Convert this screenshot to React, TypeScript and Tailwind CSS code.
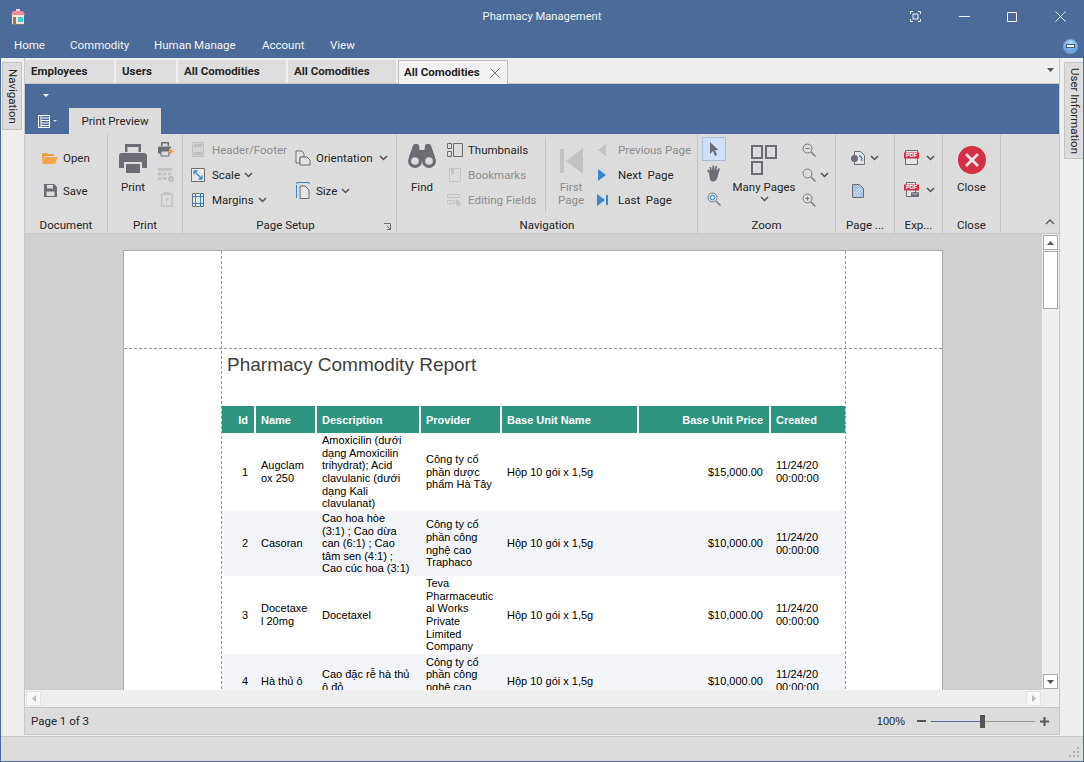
import React from "react";

const UI = "font-['Roboto',sans-serif]";

const Chev = ({ c = "#555" }: { c?: string }) => (
  <svg width="9" height="6" viewBox="0 0 9 6" className="shrink-0"><path d="M1 1l3.5 3.5L8 1" fill="none" stroke={c} strokeWidth="1.5" /></svg>
);

const PdfLabel = () => (
  <text x="7.5" y="7.2" textAnchor="middle" fontSize="5.5" fontWeight="700" fontFamily="Liberation Sans, sans-serif" fill="#fff">PDF</text>
);

const Ic = {
  Open: () => (
    <svg width="16" height="14" viewBox="0 0 16 14"><path d="M0 2h5l1 1h6v2H3L0 11z" fill="#f0a040" /><path d="M3 6h13l-3 7H0z" fill="#f4a54a" /></svg>
  ),
  Save: () => (
    <svg width="13" height="13" viewBox="0 0 13 13"><path d="M0 0h10l3 3v10H0z" fill="#6d6e75" /><path d="M3 1h6v3.500H3z" fill="#ddd" /><path d="M2.500 7.500h8V12h-8z" fill="#ddd" /></svg>
  ),
  Printer: () => (
    <svg width="28" height="29" viewBox="0 0 28 29"><path d="M6 0h16v8H19.500V3h-11v5H6z" fill="#6d6e75" /><path d="M3 9h22a3 3 0 013 3v12h-5v-6H5v6H0V12a3 3 0 013-3z" fill="#6d6e75" /><path d="M7 20h14v9H7z" fill="#6d6e75" /></svg>
  ),
  PrintQuick: () => (
    <svg width="17" height="16" viewBox="0 0 17 16"><path d="M3 0h8v4H9.500V1.500h-5V4H3z" fill="#6d6e75" /><path d="M1 4.500h12v1l-2 2 1 1v3H0v-6z" fill="#6d6e75" /><path d="M3 9h8v5H3z" fill="#ddd" stroke="#6d6e75" /><path d="M13 6l1 2.500 2.500 1-2.500 1-1 2.500-1-2.500-2.500-1 2.500-1z" fill="#f4a040" /></svg>
  ),
  PageSetupGrid: () => (
    <svg width="17" height="16" viewBox="0 0 17 16"><path d="M0 1h14v3H0zM0 5.500h3.500v3H0zM5 5.500h3.500v3H5zM10 5.500h3.500v3H10zM0 10h3.500v3H0zM5 10h3.500v3H5z" fill="#c2c2c2" /><circle cx="13" cy="12" r="3" fill="#bdbdbd" /><circle cx="13" cy="12" r="1" fill="#ddd" /></svg>
  ),
  Clip: () => (
    <svg width="12" height="15" viewBox="0 0 12 15"><path d="M.75 2h10.500v12.250H.75z" fill="none" stroke="#c2c2c2" strokeWidth="1.500" /><path d="M3 0h6v3H3z" fill="#c2c2c2" /><path d="M5 6h2.500v2.500H6v1H5M5 11h1.200v1.200H5z" fill="#c2c2c2" /></svg>
  ),
  Header: () => (
    <svg width="12" height="15" viewBox="0 0 12 15"><path d="M.5.500h11v14H.5z" fill="#d4d4d4" stroke="#bfbfbf" /><path d="M2 2h8v3H2zM2 10h8v3H2z" fill="#bfbfbf" /></svg>
  ),
  Scale: () => (
    <svg width="14" height="14" viewBox="0 0 14 14"><path d="M.5.500h13v13H.5z" fill="#e8e8e8" stroke="#6d6e75" /><path d="M3 3l8 8M3 3h3.500M3 3v3.500M11 11H7.500M11 11V7.500" fill="none" stroke="#3f86c8" strokeWidth="1.300" /></svg>
  ),
  Margins: () => (
    <svg width="12" height="14" viewBox="0 0 12 14"><path d="M.5.500h11v13H.5z" fill="#e4e9f0" stroke="#6d6e75" /><path d="M3.500 0v14M8.500 0v14M0 3.500h12M0 10.500h12" stroke="#3f7fc0" /></svg>
  ),
  Orientation: () => (
    <svg width="16" height="16" viewBox="0 0 16 16"><path d="M1 1h6l2 3v3H5v6H1z" fill="#e4e4e4" stroke="#6d6e75" /><path d="M5 7h7l3 3v5H5z" fill="#e4e4e4" stroke="#6d6e75" /></svg>
  ),
  Size: () => (
    <svg width="15" height="17" viewBox="0 0 15 17"><path d="M1 .500h12M1 0v2M13 0v2" stroke="#3f86c8" fill="none" /><path d="M.5 3v13" stroke="#3f86c8" /><path d="M4 4h5l4 4v8.500H4z" fill="#e4e4e4" stroke="#6d6e75" /></svg>
  ),
  Binoculars: () => (
    <svg width="28" height="24" viewBox="0 0 28 24">
      <path d="M5 1.500A2 2 0 017 0h2a2 2 0 012 1.500L11.500 6h5L17 1.500A2 2 0 0119 0h2a2 2 0 012 1.500L27 13v4H1v-4z" fill="#6d6e75" />
      <circle cx="7" cy="17" r="7" fill="#6d6e75" /><circle cx="21" cy="17" r="7" fill="#6d6e75" />
      <circle cx="7" cy="17" r="3.800" fill="#dcdcdc" /><circle cx="21" cy="17" r="3.800" fill="#dcdcdc" />
    </svg>
  ),
  Thumb: () => (
    <svg width="16" height="14" viewBox="0 0 16 14"><path d="M.5.500h4v5h-4zM.5 8.500h4v5h-4zM6.500.500h9v13h-9z" fill="none" stroke="#6d6e75" /></svg>
  ),
  Bookmark: () => (
    <svg width="12" height="14" viewBox="0 0 12 14"><path d="M.5.500h11v13H.5z" fill="none" stroke="#c4c4c4" /><path d="M2 0h3v7L3.500 5.500 2 7z" fill="#c4c4c4" /></svg>
  ),
  Editing: () => (
    <svg width="16" height="14" viewBox="0 0 16 14"><path d="M.5 1.500h12v3H.5zM.5 7.500h7v3h-7z" fill="none" stroke="#c4c4c4" /><path d="M9 6l6 5-3 .5 1 2.500h-2l-1-2.500L9 13z" fill="#c4c4c4" /></svg>
  ),
  First: () => (
    <svg width="23" height="28" viewBox="0 0 23 28"><path d="M0 2h4v24H0zM23 1v26L6 14z" fill="#c2c2c2" /></svg>
  ),
  Prev: () => <svg width="8" height="12" viewBox="0 0 8 12"><path d="M8 0v12L0 6z" fill="#c2c2c2" /></svg>,
  Next: () => <svg width="8" height="12" viewBox="0 0 8 12"><path d="M0 0v12l8-6z" fill="#3f86c8" /></svg>,
  Last: () => <svg width="11" height="12" viewBox="0 0 11 12"><path d="M0 0v12l8-6zM9 1h2v10H9z" fill="#3f86c8" /></svg>,
  Arrow: () => <svg width="10" height="14" viewBox="0 0 10 14"><path d="M1 0l8.500 8H6l2 5-2 1-2-5-3 3z" fill="#6d6e75" /></svg>,
  Hand: () => (
    <svg width="17" height="17" viewBox="0 0 17 17"><path d="M3 8L1 5.500 2.200 4.500 4 6 3.500 2h1.500l1 3.500L6.500.500h1.500L8.500 5l1-4h1.500l-.5 5 2-3 1.500.8L12 10c-.5 4-2 6.500-5 6.500S4 14 3 8z" fill="#6d6e75" /></svg>
  ),
  Glass: ({ plus, minus, blue }: { plus?: boolean; minus?: boolean; blue?: boolean }) => (
    <svg width="14" height="14" viewBox="0 0 14 14">
      <circle cx="5.500" cy="5.500" r="4.500" fill={blue ? "#cfe0f2" : "none"} stroke="#7a7b82" />
      {blue && <circle cx="5.500" cy="5.500" r="2.300" fill="none" stroke="#3f86c8" />}
      <path d="M9 9l4.500 4.500" stroke="#7a7b82" strokeWidth="1.500" />
      {(plus || minus) && <path d="M3.500 5.500h4" stroke="#7a7b82" />}
      {plus && <path d="M5.500 3.500v4" stroke="#7a7b82" />}
    </svg>
  ),
  Many: () => (
    <svg width="26" height="30" viewBox="0 0 26 30"><path d="M1 1h10v12H1zM15 1h10v12H15zM1 17h10v12H1z" fill="none" stroke="#6d6e75" strokeWidth="2" /></svg>
  ),
  PageColor: () => (
    <svg width="14" height="14" viewBox="0 0 14 14"><path d="M3.500.500h6l4 4v9h-10z" fill="#e4e4e4" stroke="#6d6e75" /><circle cx="3.500" cy="7.500" r="3.500" fill="#6d6e75" /><path d="M8 5c2 0 3 1.500 3 5" fill="none" stroke="#3f86c8" strokeWidth="1.500" /></svg>
  ),
  Watermark: () => (
    <svg width="12" height="14" viewBox="0 0 12 14"><path d="M.5.500h7l4 4v9H.5z" fill="#a9c4e2" stroke="#6d6e75" /><path d="M2 12l7-7M2 9l5-5M5 12l5-5" stroke="#dbe6f2" /></svg>
  ),
  Pdf: () => (
    <svg width="15" height="15" viewBox="0 0 15 15">
      <path d="M1.500.500h12v14h-12z" fill="#e4e4e4" stroke="#6d6e75" strokeWidth="1" />
      <path d="M0 2.500h15v6H0z" fill="#d42e44" />
      <PdfLabel />
    </svg>
  ),
  PdfMail: () => (
    <svg width="15" height="15" viewBox="0 0 15 15">
      <path d="M2.500.500h9v14h-9z" fill="#e4e4e4" stroke="#6d6e75" strokeWidth="1" />
      <path d="M0 2.500h15v6H0z" fill="#d42e44" />
      <PdfLabel />
      <path d="M7 10h8v5H7z" fill="#6d6e75" /><path d="M7.500 10.500l3.500 2 3.500-2" fill="none" stroke="#ddd" strokeWidth=".7" />
    </svg>
  ),
  Close: () => (
    <svg width="28" height="28" viewBox="0 0 28 28"><circle cx="14" cy="14" r="14" fill="#d32f45" /><path d="M8 8l12 12M20 8L8 20" stroke="#f1e4e6" strokeWidth="2.800" /></svg>
  ),
};

const Small = ({ icon, label, dim, w = 16, gap = 5, chev, chevGap = 4 }: any) => (
  <div className={`h-[25px] flex items-center ${dim ? "text-[#8e8e8e]" : "text-[#262626]"}`}>
    <div className="flex justify-center items-center shrink-0" style={{ width: w }}>{icon}</div>
    {label && <span className="whitespace-nowrap pt-[2px]" style={{ marginLeft: gap }}>{label}</span>}
    {chev && <span style={{ marginLeft: chevGap }}><Chev /></span>}
  </div>
);

const Group = ({ w, label, children, launcher }: any) => (
  <div className="relative h-full flex flex-col border-r border-[#c4c4c4] shrink-0" style={{ width: w }}>
    <div className="h-[83px] flex items-start">{children}</div>
    <div className={`flex-1 text-center text-[#262626] truncate leading-[16px] ${launcher ? "pr-[8px]" : ""}`}>{label}</div>
    {launcher && (
      <svg width="7" height="7" viewBox="0 0 7 7" className="absolute right-[5px] bottom-[3px]"><path d="M0 .500h6.500V7M3 3l3 3M3 6.500h3.500" fill="none" stroke="#6d6e75" /></svg>
    )}
  </div>
);

const Tab = ({ w, children }: any) => (
  <div className="h-[24px] flex items-center pl-[6px] pt-[1px] mr-[2px] bg-[#dddddd] font-bold text-[#262626] border-b border-[#c8c8c8]" style={{ width: w }}>{children}</div>
);

const SideTab = ({ h, label }: { h: number; label: string }) => (
  <div className="w-[20px] bg-[#dcdcdc] border border-[#c4c4c4] text-[#262626] flex justify-center items-center whitespace-nowrap [writing-mode:vertical-rl]" style={{ height: h }}>
    {label}
  </div>
);

const cols = [34, 61, 104, 81, 137, 132, 74];
const rows: { h: number; alt?: boolean; c: string[] }[] = [
  { h: 78, c: ["1", "Augclam\nox 250", "Amoxicilin (dưới\ndạng Amoxicilin\ntrihydrat); Acid\nclavulanic (dưới\ndạng Kali\nclavulanat)", "Công ty cổ\nphần dược\nphẩm Hà Tây", "Hộp 10 gói x 1,5g", "$15,000.00", "11/24/20\n00:00:00"] },
  { h: 65, alt: true, c: ["2", "Casoran", "Cao hoa hòe\n(3:1) ; Cao dừa\ncan (6:1) ; Cao\ntâm sen (4:1) ;\nCao cúc hoa (3:1)", "Công ty cổ\nphần công\nnghệ cao\nTraphaco", "Hộp 10 gói x 1,5g", "$10,000.00", "11/24/20\n00:00:00"] },
  { h: 78, c: ["3", "Docetaxe\nl 20mg", "Docetaxel", "Teva\nPharmaceutic\nal Works\nPrivate\nLimited\nCompany", "Hộp 10 gói x 1,5g", "$10,000.00", "11/24/20\n00:00:00"] },
  { h: 54, alt: true, c: ["4", "Hà thủ ô", "Cao đặc rễ hà thủ\nô đỏ", "Công ty cổ\nphần công\nnghệ cao\nTraphaco", "Hộp 10 gói x 1,5g", "$10,000.00", "11/24/20\n00:00:00"] },
];
const heads = ["Id", "Name", "Description", "Provider", "Base Unit Name", "Base Unit Price", "Created"];
const rightCol = (i: number) => i === 0 || i === 5;

export default function App() {
  return (
    <div className={`${UI} w-[1084px] h-[762px] overflow-hidden bg-[#efefef] text-[11.5px] flex flex-col border-x border-b border-[#4d6b9a]`}>
      {/* title bar */}
      <div className="h-[33px] shrink-0 bg-[#4d6b9a] grid grid-cols-[1fr_auto_1fr] items-center text-[#f2f2f2]">
        <svg width="16" height="16" viewBox="0 0 16 16" className="ml-[9px]">
          <path d="M3 2h10l2 4H1z" fill="#f08c9c" /><path d="M6 0h4v2H6z" fill="#f4d0d6" /><path d="M2 6h12v9H2z" fill="#f6e8d0" /><path d="M8 8h5v5H8z" fill="#45c8d8" /><path d="M3 8h3v7H3z" fill="#8a7a5a" /><path d="M1 15h14v1H1z" fill="#777" />
        </svg>
        <div className="text-center text-[11.2px] pt-[2px]">Pharmacy Management</div>
        <div className="flex items-center justify-end pr-[17px]">
          <svg width="11" height="11" viewBox="0 0 11 11" className="mr-[38px]"><path d="M.5 3V.500H3M8 .500h2.500V3M10.500 8v2.500H8M3 10.500H.5V8M3 3h5v5H3z" fill="none" stroke="#f2f2f2" /></svg>
          <svg width="11" height="11" viewBox="0 0 11 11" className="mr-[37px]"><path d="M0 5.500h11" stroke="#f2f2f2" /></svg>
          <svg width="10" height="10" viewBox="0 0 10 10" className="mr-[38px]"><path d="M.5.500h9v9h-9z" fill="none" stroke="#f2f2f2" /></svg>
          <svg width="11" height="11" viewBox="0 0 11 11"><path d="M.5.500l10 10M10.500.500l-10 10" stroke="#f2f2f2" /></svg>
        </div>
      </div>
      {/* menu */}
      <div className="h-[25px] shrink-0 bg-[#4d6b9a] flex items-center text-[#f2f2f2] pt-[1px]">
        <span className="ml-[13px] w-[56px]">Home</span>
        <span className="w-[84px]">Commodity</span>
        <span className="w-[108px]">Human Manage</span>
        <span className="w-[68px]">Account</span>
        <span>View</span>
        <div className="ml-auto mr-[5px] w-[15px] h-[15px] rounded-full bg-[radial-gradient(circle_at_50%_20%,#b0d4f2,#4d94d8)] flex items-center justify-center border border-[#7aa6d4]">
          <div className="w-[9px] h-[4px] bg-white border border-[#3a5a88]" />
        </div>
      </div>
      {/* body */}
      <div className="flex-1 flex min-h-0">
        <div className="w-[23px] shrink-0 pt-[4px] pl-[1px]"><SideTab h={68} label="Navigation" /></div>
        <div className="w-[1036px] shrink-0 flex flex-col border-x border-[#c8c8c8] mb-[1px] border-b">
          {/* tabs */}
          <div className="h-[25px] shrink-0 pt-[2px] flex bg-[#efefef] relative">
            <Tab w={89}>Employees</Tab>
            <Tab w={60}>Users</Tab>
            <Tab w={108}>All Comodities</Tab>
            <Tab w={108}>All Comodities</Tab>
            <div className="h-[24px] w-[110px] flex items-center justify-between pl-[5px] pr-[7px] bg-[#f2f2f2] border border-b-0 border-[#c0c0c0] font-bold text-[#262626] z-10">
              All Comodities
              <svg width="10" height="10" viewBox="0 0 10 10"><path d="M.5.500l9 9M9.500.500l-9 9" stroke="#777" /></svg>
            </div>
            <svg width="7" height="4" viewBox="0 0 7 4" className="absolute right-[5px] top-[10px]"><path d="M0 0h7L3.500 4z" fill="#555" /></svg>
          </div>
          {/* ribbon head */}
          <div className="h-[51px] shrink-0 bg-[#4d6b9a] flex flex-col border-t border-[#c8c8c8]">
            <div className="h-[24px] pl-[18px] pt-[10px]">
              <svg width="6" height="3" viewBox="0 0 6 3" className="block"><path d="M0 0h6L3 3z" fill="#fff" /></svg>
            </div>
            <div className="flex items-end flex-1 pl-[13px]">
              <div className="w-[32px] h-[26px] flex items-center gap-[3px]">
                <svg width="12" height="13" viewBox="0 0 12 13"><path d="M.5.500h11v12H.5z" fill="#4d6b9a" stroke="#fff" /><path d="M3 0v13M3 3h9M3 5.500h9M3 8h9M3 10.500h9" stroke="#fff" /></svg>
                <svg width="4" height="2" viewBox="0 0 4 2"><path d="M0 0h4L2 2z" fill="#ddd" /></svg>
              </div>
              <div className="ml-[-1px] w-[92px] h-[26px] pt-[2px] bg-[#dcdcdc] text-[#262626] flex items-center justify-center">Print Preview</div>
            </div>
          </div>
          {/* ribbon */}
          <div className="h-[100px] shrink-0 bg-[#dcdcdc] flex relative border-b border-[#c8c8c8]">
            <Group w={83} label="Document">
              <div className="flex flex-col pl-[17px] pt-[11px]">
                <div className="h-[33px]"><Small icon={<Ic.Open />} label="Open" /></div>
                <Small icon={<Ic.Save />} label="Save" />
              </div>
            </Group>
            <Group w={75} label="Print">
              <div className="flex w-full pt-[3px]">
                <div className="w-[50px] flex flex-col items-center pt-[7px]">
                  <Ic.Printer />
                  <span className="mt-[6px] text-[#262626]">Print</span>
                </div>
                <div className="flex flex-col">
                  <Small icon={<Ic.PrintQuick />} w={17} />
                  <Small icon={<Ic.PageSetupGrid />} w={17} />
                  <Small icon={<Ic.Clip />} w={17} />
                </div>
              </div>
            </Group>
            <Group w={214} label="Page Setup" launcher>
              <div className="flex pt-[3px] pl-[8px]">
                <div className="flex flex-col w-[104px]">
                  <Small icon={<Ic.Header />} label="Header/Footer" dim w={14} gap={7} />
                  <Small icon={<Ic.Scale />} label="Scale" w={14} gap={7} chev />
                  <Small icon={<Ic.Margins />} label="Margins" w={14} gap={7} chev />
                </div>
                <div className="flex flex-col pt-[8px]">
                  <div className="h-[33px]"><Small icon={<Ic.Orientation />} label="Orientation" chev chevGap={6} /></div>
                  <Small icon={<Ic.Size />} label="Size" chev />
                </div>
              </div>
            </Group>
            <Group w={301} label="Navigation">
              <div className="flex pt-[3px] h-full">
                <div className="w-[50px] flex flex-col items-center pt-[7px] text-[#262626]">
                  <Ic.Binoculars />
                  <span className="mt-[11px]">Find</span>
                </div>
                <div className="flex flex-col w-[99px] border-r border-[#c4c4c4] h-[75px]">
                  <Small icon={<Ic.Thumb />} label="Thumbnails" />
                  <Small icon={<Ic.Bookmark />} label="Bookmarks" dim />
                  <Small icon={<Ic.Editing />} label="Editing Fields" dim />
                </div>
                <div className="w-[50px] flex flex-col items-center pt-[10px] text-[#8e8e8e] leading-[13px]">
                  <Ic.First />
                  <span className="mt-[6px]">First</span>
                  <span>Page</span>
                </div>
                <div className="flex flex-col">
                  <Small icon={<Ic.Prev />} label="Previous Page" dim w={12} gap={10} />
                  <Small icon={<Ic.Next />} label={<span className="whitespace-pre">Next  Page</span>} w={12} gap={10} />
                  <Small icon={<Ic.Last />} label={<span className="whitespace-pre">Last  Page</span>} w={12} gap={10} />
                </div>
              </div>
            </Group>
            <Group w={138} label="Zoom">
              <div className="flex pt-[3px] pl-[4px]">
                <div className="flex flex-col items-center w-[24px]">
                  <div className="w-[24px] h-[24px] bg-[#cfdff7] border border-[#a8bcdc] flex items-center justify-center"><Ic.Arrow /></div>
                  <div className="h-[25px] flex items-center"><Ic.Hand /></div>
                  <div className="h-[25px] flex items-center"><Ic.Glass blue /></div>
                </div>
                <div className="w-[76px] flex flex-col items-center pt-[8px] text-[#262626]">
                  <Ic.Many />
                  <span className="mt-[4px]">Many Pages</span>
                  <Chev />
                </div>
                <div className="flex flex-col">
                  <Small icon={<Ic.Glass minus />} w={14} />
                  <div className="h-[25px] flex items-center gap-[4px]"><Ic.Glass /><Chev /></div>
                  <Small icon={<Ic.Glass plus />} w={14} />
                </div>
              </div>
            </Group>
            <Group w={59} label="Page ...">
              <div className="flex flex-col pl-[15px] pt-[11px]">
                <div className="h-[33px]"><Small icon={<Ic.PageColor />} w={14} chev chevGap={5} /></div>
                <div className="pl-[1px]"><Small icon={<Ic.Watermark />} w={12} /></div>
              </div>
            </Group>
            <Group w={48} label="Exp...">
              <div className="flex flex-col pl-[9px] pt-[11px]">
                <div className="h-[32px]"><Small icon={<Ic.Pdf />} w={15} chev chevGap={7} /></div>
                <Small icon={<Ic.PdfMail />} w={15} chev chevGap={7} />
              </div>
            </Group>
            <Group w={58} label="Close">
              <div className="w-full flex flex-col items-center pt-[12px] text-[#262626]">
                <Ic.Close />
                <span className="mt-[5px]">Close</span>
              </div>
            </Group>
            <svg width="10" height="6" viewBox="0 0 10 6" className="absolute right-[4px] bottom-[8px]"><path d="M1 5l4-4 4 4" fill="none" stroke="#555" strokeWidth="1.300" /></svg>
          </div>
          {/* preview */}
          <div className="flex-1 min-h-0 flex flex-col">
            <div className="flex-1 min-h-0 flex">
              <div className="flex-1 min-w-0 bg-[#d0d0d0] overflow-hidden pt-[16px] pl-[98px]">
                <div className="relative w-[820px] h-[500px] bg-white border border-[#ababab] font-['Liberation_Sans',sans-serif] text-black pl-[98px]">
                  <div className="h-[155px] pt-[102px] pl-[5px] text-[19px] leading-[24px] text-[#404040]">Pharmacy Commodity Report</div>
                  <div className="flex w-[623px] h-[27px]">
                    {heads.map((h, i) => (
                      <div key={h} style={{ width: cols[i] }} className={`h-full shrink-0 bg-[#2e9480] text-white font-bold text-[11px] pt-[1px] flex items-center ${i < 6 ? "border-r-2 border-white" : ""} ${rightCol(i) ? "justify-end pr-[6px]" : "pl-[5px]"}`}>{h}</div>
                    ))}
                  </div>
                  {rows.map((r) => (
                    <div key={r.c[0]} className={`flex w-[623px] ${r.alt ? "bg-[#f2f4f8]" : ""}`} style={{ height: r.h }}>
                      {r.c.map((t, i) => (
                        <div key={i} style={{ width: cols[i] }} className={`shrink-0 flex items-center text-[11px] leading-[12.6px] whitespace-pre overflow-hidden ${rightCol(i) ? "justify-end text-right pr-[8px]" : "pl-[5px]"}`}>{t}</div>
                      ))}
                    </div>
                  ))}
                  <div className="absolute left-0 right-0 top-[97px] border-t border-dashed border-[#9a9a9a]" />
                  <div className="absolute left-[97px] top-0 bottom-0 border-l border-dashed border-[#9a9a9a]" />
                  <div className="absolute left-[721px] top-0 bottom-0 border-l border-dashed border-[#9a9a9a]" />
                </div>
              </div>
              {/* v scroll */}
              <div className="w-[17px] shrink-0 bg-[#efefef] flex flex-col items-center pt-[1px] pb-[1px] justify-between">
                <div className="flex flex-col items-center">
                  <div className="w-[15px] h-[15px] bg-white border border-[#aaa] flex items-center justify-center"><svg width="7" height="4" viewBox="0 0 7 4"><path d="M0 4h7L3.500 0z" fill="#555" /></svg></div>
                  <div className="w-[15px] h-[58px] bg-white border border-[#aaa] mt-[1px]" />
                </div>
                <div className="w-[15px] h-[15px] bg-white border border-[#aaa] flex items-center justify-center"><svg width="7" height="4" viewBox="0 0 7 4"><path d="M0 0h7L3.500 4z" fill="#555" /></svg></div>
              </div>
            </div>
            {/* h scroll */}
            <div className="h-[17px] shrink-0 bg-[#efefef] flex items-center justify-between pl-[1px] pr-[18px]">
              <div className="w-[15px] h-[15px] bg-[#f8f8f8] border border-[#e4e4e4] flex items-center justify-center"><svg width="4" height="7" viewBox="0 0 4 7"><path d="M4 0v7L0 3.500z" fill="#bbb" /></svg></div>
              <div className="w-[15px] h-[15px] bg-[#f8f8f8] border border-[#e4e4e4] flex items-center justify-center"><svg width="4" height="7" viewBox="0 0 4 7"><path d="M0 0v7l4-3.500z" fill="#bbb" /></svg></div>
            </div>
            {/* status */}
            <div className="h-[27px] shrink-0 bg-[#dcdcdc] border-t border-[#c4c4c4] flex items-center pl-[6px] pr-[10px] text-[#262626]">
              <span className="pt-[1px]">Page 1 of 3</span>
              <span className="ml-auto font-['Liberation_Sans',sans-serif] text-[11px]">100%</span>
              <span className="ml-[12px] w-[9px] h-[2px] bg-[#555]" />
              <div className="ml-[5px] w-[104px] h-[13px] relative flex items-center">
                <div className="w-[50px] h-px bg-[#4d6b9a]" />
                <div className="flex-1 h-px bg-[#999]" />
                <div className="absolute left-[49px] top-0 w-[5px] h-[13px] bg-[#555]" />
              </div>
              <svg width="9" height="9" viewBox="0 0 9 9" className="ml-[5px]"><path d="M0 4.500h9M4.500 0v9" stroke="#555" strokeWidth="2" /></svg>
            </div>
          </div>
        </div>
        <div className="w-[23px] shrink-0 pt-[4px] pl-[4px]"><SideTab h={97} label="User Information" /></div>
      </div>
      {/* bottom bar */}
      <div className="h-[25px] shrink-0 bg-[#dcdcdc] border-t border-[#c8c8c8] flex justify-end items-end pr-[3px] pb-[3px]">
        <svg width="11" height="11" viewBox="0 0 11 11"><path d="M8 0h2v2H8zM4 4h2v2H4zM8 4h2v2H8zM0 8h2v2H0zM4 8h2v2H4zM8 8h2v2H8z" fill="#b0b0b0" /></svg>
      </div>
    </div>
  );
}
